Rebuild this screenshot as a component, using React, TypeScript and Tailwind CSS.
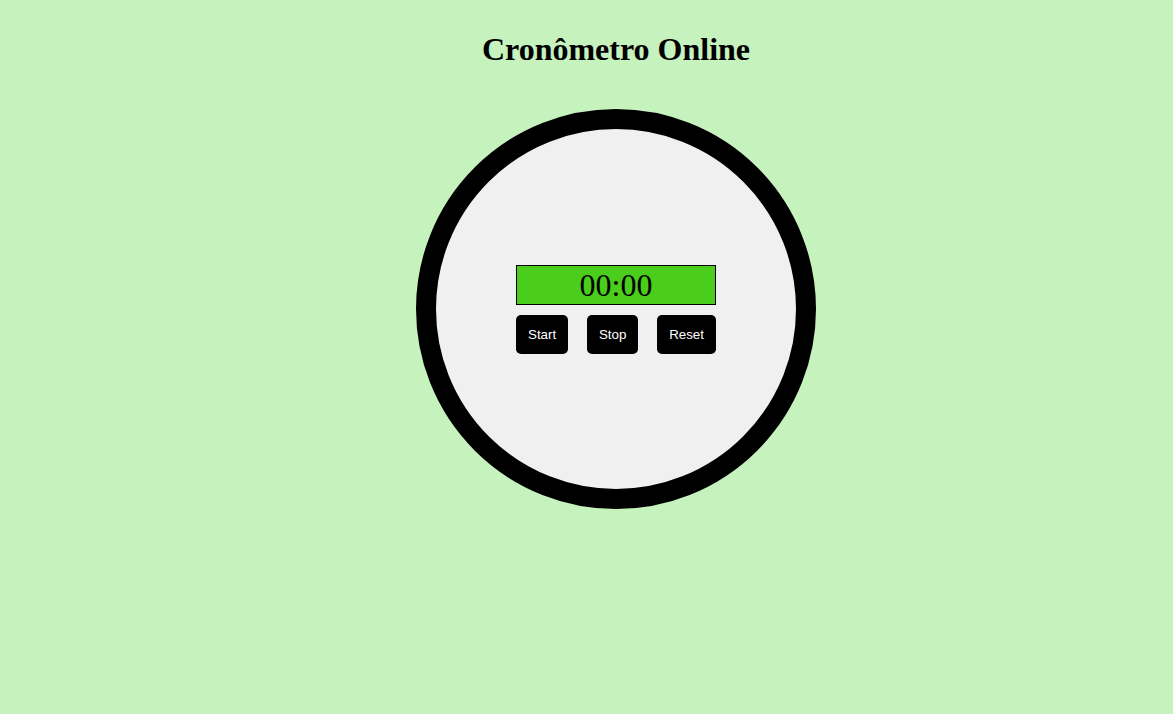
import React from "react";

export default function App() {
  return (
    <div className="min-h-[714px] w-full bg-[#c6f2bd] flex flex-col items-center pl-[59px] font-['Liberation_Serif',serif]">
      <h1 className="mt-[31px] text-[32px] font-bold leading-[37px] text-black font-['Liberation_Serif',serif]">
        Cronômetro Online
      </h1>
      <div className="mt-[41px] w-[400px] h-[400px] rounded-full border-[20px] border-black bg-[#f0f0f0] flex flex-col items-center pt-[136px]">
        <div className="w-[200px] flex flex-col gap-[10px]">
          <div className="h-[40px] border border-black bg-[#4acd1b] flex items-center justify-center text-[32px] leading-none text-black font-['Liberation_Serif',serif]">
            00:00
          </div>
          <div className="flex justify-between">
            {["Start", "Stop", "Reset"].map((t) => (
              <button
                key={t}
                className="h-[39px] px-[12px] rounded-[5px] bg-black text-white text-[13.333px] font-normal font-['Liberation_Sans',Arial,sans-serif]"
              >
                {t}
              </button>
            ))}
          </div>
        </div>
      </div>
    </div>
  );
}
